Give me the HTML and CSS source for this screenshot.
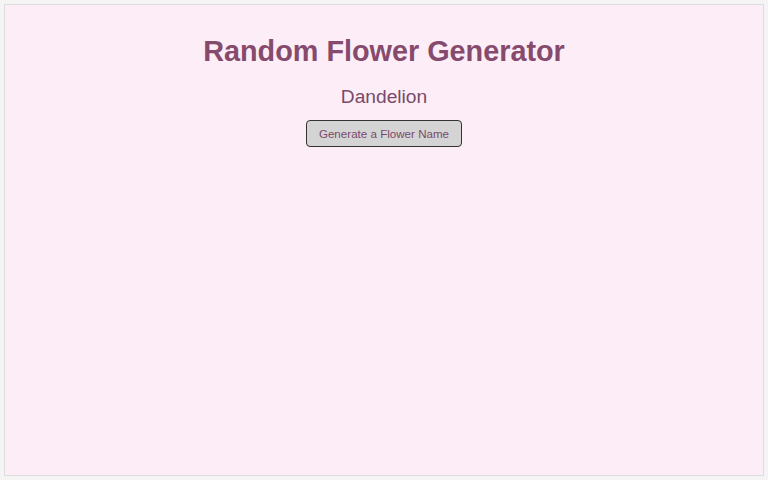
FILE: index.html
```html
<!DOCTYPE html>
<html lang="en">
<head>
  <meta charset="UTF-8">
  <title>Random Flower Generator</title>
  <link rel="stylesheet" href="styles.css">
</head>
<body>

<div class="contenedor">
  <h1>Random Flower Generator</h1>
  <p id="flor" class="nombre-flor">Dandelion</p>
  <button type="button" onclick="generarFlor()">Generate a Flower Name</button>
</div>

<script>
  const flores = ["Dandelion", "Rose", "Tulip", "Daisy", "Lily", "Orchid", "Sunflower", "Peony"];

  function generarFlor() {
    const indice = Math.floor(Math.random() * flores.length);
    document.getElementById("flor").textContent = flores[indice];
  }
</script>

</body>
</html>
```

FILE: styles.css
```css
body {
  font-family: "Liberation Sans", Arial, sans-serif;
  background-color: #f4f4f4;
  margin: 0;
  padding: 4px;
}

.contenedor {
  height: 472px;
  background-color: #fcedf7;
  border: 1px solid #dddddd;
  text-align: center;
  padding-top: 30px;
  box-sizing: border-box;
}

.contenedor h1 {
  margin: 0 0 19px;
  font-size: 28.8px;
  line-height: 32px;
  color: #864a6d;
}

.nombre-flor {
  margin: 0 0 12px;
  font-size: 19.2px;
  line-height: 22px;
  color: #7a4a6a;
}

button {
  background-color: #d4d4d4;
  color: #7a4a6a;
  padding: 6px 12px;
  border: 1px solid #333333;
  border-radius: 4px;
  font-family: "Liberation Sans", Arial, sans-serif;
  font-size: 11.6px;
  line-height: 13px;
  cursor: pointer;
}

button:hover {
  background-color: #c8c8c8;
}
```
